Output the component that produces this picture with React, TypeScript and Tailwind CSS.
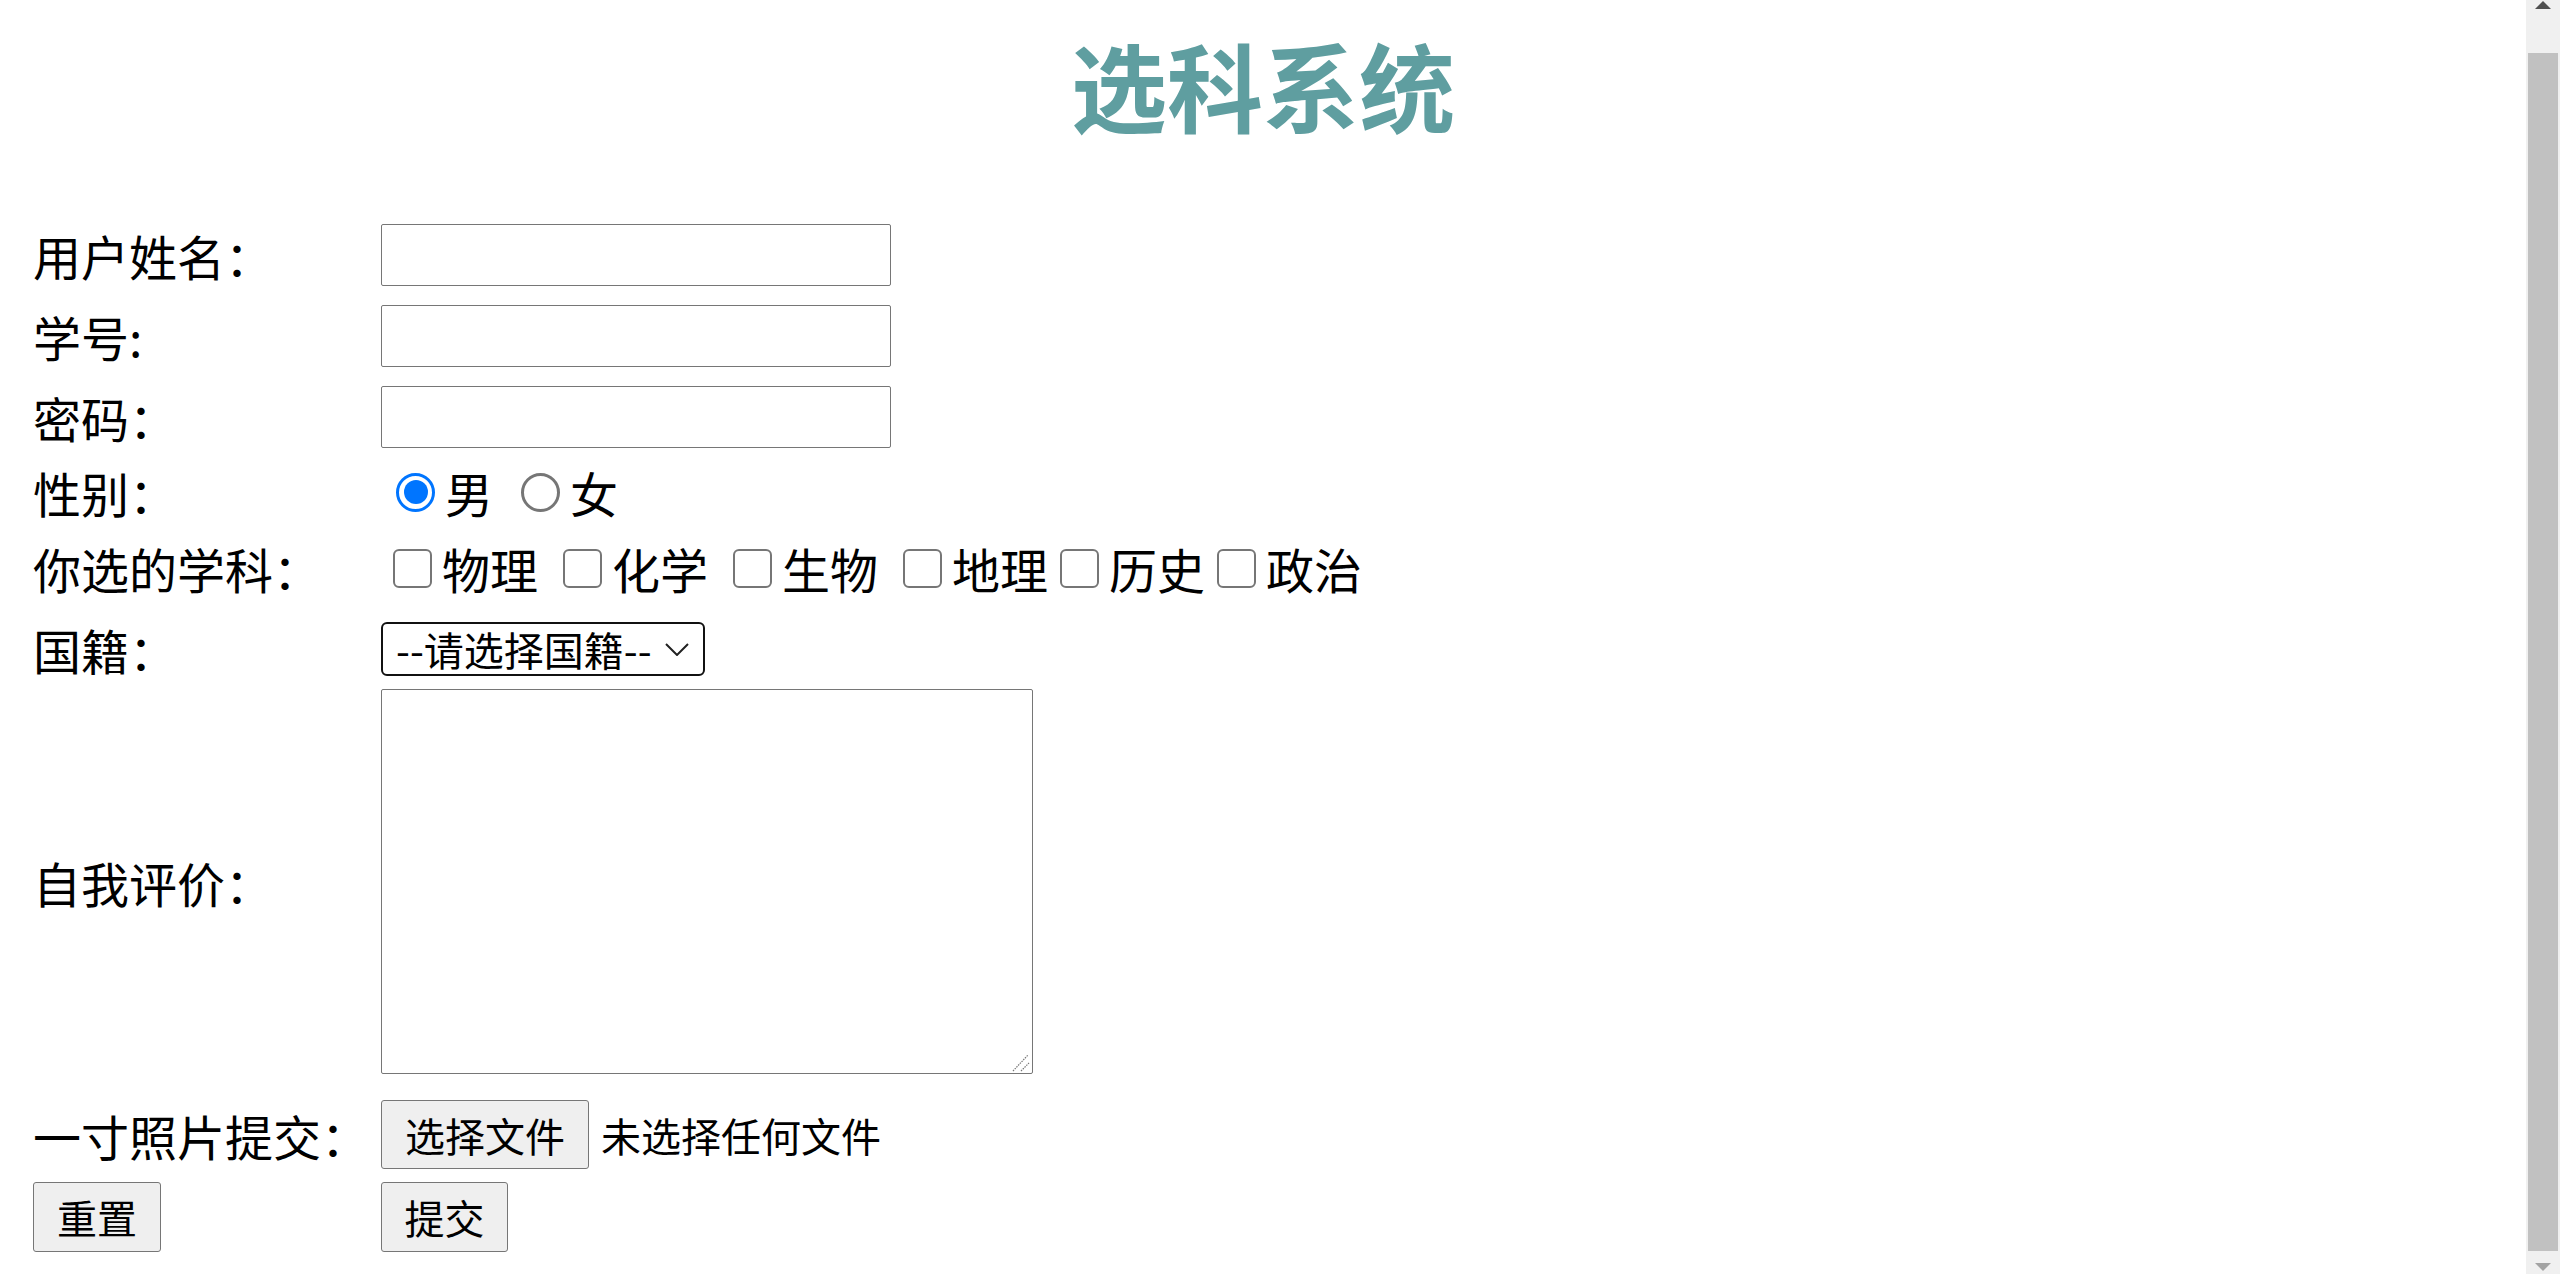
import type { ReactNode } from "react";

// 选科系统表单 — 按 3 倍缩放的浏览器默认控件样式还原
function Row({ label, h, className = "", children }: { label?: ReactNode; h: string; className?: string; children?: ReactNode }) {
  return (
    <div className={`flex items-center ${h} ${className}`}>
      <div className="flex w-[348px] shrink-0 items-center text-[48px] leading-none">{label}</div>
      <div className="flex items-center">{children}</div>
    </div>
  );
}

function TextBox() {
  return <input type="text" className="h-[62px] w-[510px] rounded-[2px] border border-[#767676] bg-white outline-none" />;
}

function Radio({ checked }: { checked?: boolean }) {
  if (checked) {
    return (
      <span className="ml-[15px] mr-[10px] flex size-[39px] items-center justify-center rounded-full border-[3px] border-[#0075ff]">
        <span className="size-[24px] rounded-full bg-[#0075ff]" />
      </span>
    );
  }
  return <span className="ml-[15px] mr-[10px] block size-[39px] rounded-full border-[3px] border-[#767676]" />;
}

function Check({ text, spaced }: { text: string; spaced?: boolean }) {
  return (
    <span className={`flex items-center ${spaced ? "mr-[13px]" : ""}`}>
      <span className="ml-[12px] mr-[10px] block size-[39px] rounded-[6px] border-[2.5px] border-[#767676]" />
      <span className="text-[48px] leading-none">{text}</span>
    </span>
  );
}

const btn = "flex items-center justify-center rounded-[3px] border border-[#767676] bg-[#efefef] text-[40px] leading-none";

export default function App() {
  return (
    <div className="flex h-[1274px] w-full overflow-hidden bg-white font-['Noto_Sans_CJK_SC',sans-serif] text-black">
      <main className="flex min-w-0 flex-1 flex-col">
        <h1 className="flex h-[168px] items-center justify-center text-[96px] font-bold leading-none text-[#5f9ea0]">选科系统</h1>

        <form className="mt-[46px] flex flex-col pl-[33px]">
          <Row label="用户姓名：" h="h-[81px]">
            <TextBox />
          </Row>
          <Row label="学号:" h="h-[81px]">
            <TextBox />
          </Row>
          <Row label="密码：" h="h-[81px]">
            <input type="password" className="h-[62px] w-[510px] rounded-[2px] border border-[#767676] bg-white outline-none" />
          </Row>
          <Row label="性别：" h="h-[70px]">
            <Radio checked />
            <span className="mr-[13px] text-[48px] leading-none">男</span>
            <Radio />
            <span className="text-[48px] leading-none">女</span>
          </Row>
          <Row label="你选的学科：" h="h-[82px]">
            <Check text="物理" spaced />
            <Check text="化学" spaced />
            <Check text="生物" spaced />
            <Check text="地理" />
            <Check text="历史" />
            <Check text="政治" />
          </Row>
          <Row label="国籍：" h="h-[80px]">
            <div className="flex h-[54px] w-[324px] items-center justify-between rounded-[6px] border-2 border-[#111] pl-[13px] pr-[14px] text-[40px] leading-none">
              <span>--请选择国籍--</span>
              <svg width="24" height="13" viewBox="0 0 24 13" fill="none" stroke="#222" strokeWidth="2">
                <polyline points="1,1 12,12 23,1" />
              </svg>
            </div>
          </Row>
          <Row label="自我评价：" h="h-[385px]">
            <div className="relative h-[385px] w-[652px]">
              <textarea className="block h-full w-full resize-none rounded-[2px] border border-[#767676] outline-none" />
              <svg className="absolute bottom-[2px] right-[3px]" width="18" height="18" viewBox="0 0 18 18" stroke="#777" strokeWidth="1.2" strokeDasharray="1.5 1">
                <line x1="1" y1="17" x2="16" y2="1" />
                <line x1="9" y1="17" x2="17" y2="9" />
              </svg>
            </div>
          </Row>
          <Row label="一寸照片提交：" h="h-[69px]" className="mt-[26px]">
            <button type="button" className={`${btn} h-[69px] w-[208px]`}>选择文件</button>
            <span className="ml-[12px] text-[40px] leading-none">未选择任何文件</span>
          </Row>
          <Row
            label={<button type="reset" className={`${btn} h-[70px] w-[128px]`}>重置</button>}
            h="h-[70px]"
            className="mt-[13px]"
          >
            <button type="submit" className={`${btn} h-[70px] w-[127px]`}>提交</button>
          </Row>
        </form>
      </main>

      {/* 滚动条（页面已滚到底部） */}
      <aside className="relative w-[34px] shrink-0 bg-[#f0f0f0]">
        <svg className="absolute left-[9px] top-[1px]" width="16" height="8" viewBox="0 0 16 8">
          <polygon points="8,0 16,8 0,8" fill="#505050" />
        </svg>
        <div className="mx-[2px] mt-[53px] h-[1198px] bg-[#c1c1c1]" />
        <svg className="absolute bottom-[3px] left-[9px]" width="16" height="8" viewBox="0 0 16 8">
          <polygon points="0,0 16,0 8,8" fill="#a3a3a3" />
        </svg>
      </aside>
    </div>
  );
}
